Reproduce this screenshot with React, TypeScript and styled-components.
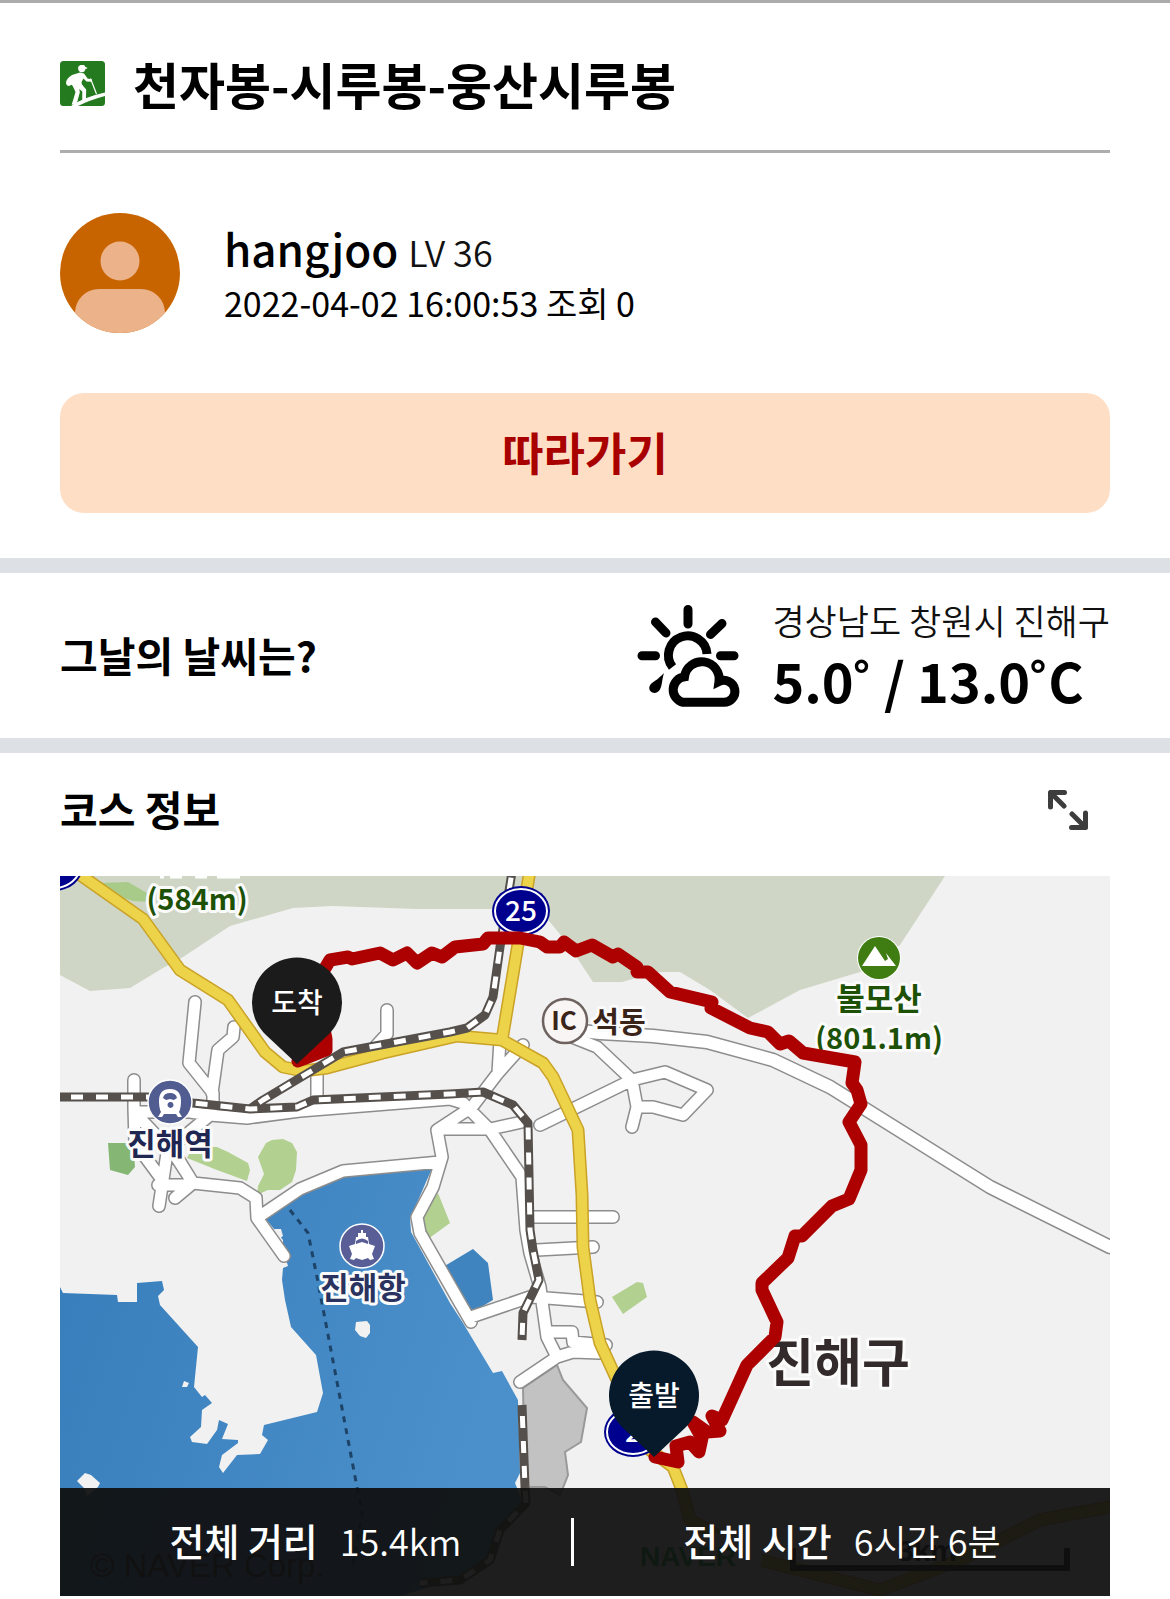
import React from "react";
import styled, { createGlobalStyle } from "styled-components";

const Global = createGlobalStyle`
  * { box-sizing: border-box; }
  body {
    margin: 0;
    background: #fff;
    color: #000;
    font-family: "Noto Sans CJK KR", sans-serif;
  }
  h1, h2, p, dl, dt, dd { margin: 0; }
`;

const Page = styled.main`
  border-top: 3px solid #ababab;
  padding-bottom: 3px;
`;

const Section = styled.section`
  padding: 0 60px;
  & + & {
    border-top: 15px solid #dde0e5;
  }
`;

const TitleBar = styled.header`
  display: flex;
  align-items: center;
  gap: 28px;
  padding: 50px 0 37px;
  border-bottom: 3px solid #adadad;
`;

const Title = styled.h1`
  font-size: 50px;
  line-height: 60px;
  font-weight: 700;
`;

const Profile = styled.div`
  display: flex;
  align-items: center;
  gap: 44px;
  padding: 60px 0;
`;

const UserLine = styled.p`
  display: flex;
  align-items: baseline;
  gap: 10px;
  line-height: 56px;
`;

const UserName = styled.a`
  color: inherit;
  text-decoration: none;
  font-size: 44px;
  font-weight: 500;
`;

const Level = styled.span`
  font-size: 36px;
  font-weight: 350;
  color: #111;
`;

const Meta = styled.p`
  font-size: 34px;
  line-height: 48px;
`;

const FollowButton = styled.button`
  display: block;
  width: 100%;
  height: 120px;
  margin-bottom: 45px;
  padding: 0 0 4px;
  border: 0;
  border-radius: 24px;
  background: #ffdec6;
  color: #a90000;
  font: inherit;
  font-size: 45px;
  font-weight: 700;
`;

const Row = styled.div<{ $height: number; $lift?: number }>`
  display: flex;
  align-items: center;
  justify-content: space-between;
  min-height: ${(p) => p.$height}px;
  padding-bottom: ${(p) => p.$lift ?? 0}px;
`;

const Heading = styled.h2`
  padding-bottom: 4px;
  font-size: 41px;
  line-height: 60px;
  font-weight: 700;
`;

const Weather = styled.div`
  display: flex;
  align-items: center;
  gap: 22px;
`;

const Place = styled.p`
  font-size: 35px;
  line-height: 48px;
  font-weight: 350;
  color: #111;
`;

const Temperature = styled.p`
  font-size: 54px;
  line-height: 72px;
  font-weight: 700;
`;

const IconButton = styled.button`
  display: flex;
  padding: 22px;
  border: 0;
  background: none;
  color: #3d3d3d;
`;

const MapFrame = styled.div`
  position: relative;
  overflow: hidden;
`;

const MapSvg = styled.svg`
  display: block;
  width: 100%;
  height: auto;
  font-family: "Noto Sans CJK KR", sans-serif;
`;

const Summary = styled.dl`
  position: absolute;
  left: 0;
  right: 0;
  bottom: 0;
  display: flex;
  align-items: center;
  justify-content: space-evenly;
  height: 108px;
  background: rgba(16, 16, 16, 0.94);
  color: #fff;
`;

const Stat = styled.div`
  display: flex;
  align-items: baseline;
  gap: 22px;
  padding-bottom: 4px;
  line-height: 48px;
`;

const StatName = styled.dt`
  font-size: 38px;
  font-weight: 500;
`;

const StatValue = styled.dd`
  font-size: 36px;
  font-weight: 350;
`;

const Bar = styled.div`
  width: 3px;
  height: 48px;
  background: #fff;
`;

const HikerIcon = () => (
  <svg width="45" height="45" viewBox="0 0 45 45" aria-hidden="true">
    <rect width="45" height="45" rx="3.5" fill="#247a1f" />
    <g fill="#fff">
      <circle cx="21.8" cy="7.6" r="3.6" />
      <path d="M18.5 5.6 Q21 3.2 24.4 4.2 L25.4 6 L27.4 6.8 L27 7.8 L18.6 7.6Z" />
      <path d="M20 11.5 L12 14 Q6.5 17 6 22 Q6.5 25 9 25 L11.5 23.8 L14.5 26.5 L22.5 26 L21.5 21 L23.5 17.5 L26.5 20.5 L31.5 20.8 L32 18.4 L27.6 17.6 L24 12.5Z" />
      <path d="M12.5 24.5 L15.5 31 L13 39.5 L11.6 43.5 L15.5 44 L17.2 41 L19.8 31.5 L19 25Z" />
      <path d="M15.5 25 L22.3 30.5 L22.2 39.8 L27.5 39.2 L26 37.2 L26.2 28.5 L21.5 23Z" />
      <path d="M45 31.5 Q24 36 11 45 L18 45 Q30 39 45 35Z" />
    </g>
    <path d="M30.5 17.5 L36.5 33" stroke="#fff" strokeWidth="1.2" />
  </svg>
);

const Avatar = () => (
  <svg width="120" height="120" viewBox="0 0 120 120" role="img" aria-label="hangjoo">
    <clipPath id="avatar">
      <circle cx="60" cy="60" r="60" />
    </clipPath>
    <g clipPath="url(#avatar)">
      <rect width="120" height="120" fill="#c86400" />
      <circle cx="60" cy="48" r="19.5" fill="#ecb289" />
      <rect x="15" y="76" width="90" height="70" rx="24" fill="#ecb289" />
    </g>
  </svg>
);

const WeatherIcon = () => (
  <svg width="120" height="120" viewBox="0 -4 120 120" fill="none" stroke="#000" strokeWidth="9" aria-hidden="true">
    <g strokeLinecap="round">
      <path d="M58 9.5V24M12 55.7H25.5M90.5 55.7H104M25.5 22L36 33M92 23.5L80.5 34.5" />
    </g>
    <path d="M77 54A19.3 19.3 0 1 0 42.5 67" />
    <path d="M53 102.3A13 13 0 0 1 54.5 76.8A17 17 0 0 1 89 81.5A11 11 0 1 1 93 102.3Z" />
    <path d="M34 73C31 82 33 92 24.5 93C18 92 18 86 22 83C28 79 30 77 34 73Z" fill="#000" stroke="none" />
  </svg>
);

const ExpandIcon = () => (
  <svg width="40" height="40" viewBox="0 0 40 40" fill="none" stroke="currentColor" strokeWidth="5" strokeLinecap="round" strokeLinejoin="round" aria-hidden="true">
    <path d="M2.5 17V2.5H16.5M2.5 2.5L16 16M37.5 23V37.5H23.5M37.5 37.5L24 24" />
  </svg>
);

const roads = [
  "M134 1080V1107L135 1143L160 1177",
  "M195 1002L189 1063L213 1093V1106",
  "M234 1027L233 1037L218 1050L212 1093",
  "M387 1010V1034L376 1046",
  "M317 1070V1100",
  "M134 1112H190L210 1115L247 1118L300 1111L450 1099L463 1103L490 1130L522 1177L526 1230L530 1253L540 1287L547 1337L557 1357L520 1382",
  "M134 1112L177 1157L193 1183L240 1188L256 1198L257 1218L284 1256",
  "M210 1115L180 1140L167 1153L159 1206",
  "M165 1140L193 1183L175 1198",
  "M158 1185H190",
  "M257 1218L300 1189L343 1171L440 1162",
  "M472 1107L437 1130L442 1157L433 1187L417 1217L420 1233L460 1303L471 1322",
  "M471 1317L530 1297L547 1298L597 1302",
  "M440 1129H490L522 1122",
  "M472 1107L498 1073L500 1040M498 1073L523 1045",
  "M557 1357L573 1352L600 1353",
  "M547 1332H572L573 1342L606 1345",
  "M533 1217L613 1217",
  "M537 1250L593 1247",
  "M572 1037L597 1047L632 1080L637 1107L632 1127",
  "M632 1080L665 1072L707 1090L683 1115L653 1107H637",
  "M632 1080L540 1125",
];

const highway = "M572 1030L600 1033L653 1036L707 1042L773 1060L830 1087L990 1187L1110 1247";

const yellow = [
  "M76 872L143 919L180 970L228 1000L265 1052L283 1067L303 1071L327 1068L383 1053L457 1036L502 1040L543 1063L553 1077L578 1130L582 1195L583 1247L590 1300L600 1343L617 1380L650 1450L673 1467L682 1490L690 1520L760 1560L880 1590L960 1560L1040 1520L1110 1507",
  "M530 870L517 950L502 1040",
];

const rails = [
  "M60 1097H147L193 1103L250 1109L297 1107L313 1100L450 1094L483 1092L513 1105L528 1123L530 1230L533 1250L539 1280L523 1313L522 1340",
  "M250 1109L263 1100L343 1052L450 1032L467 1028L485 1015L493 997L500 947L512 872",
  "M522 1405L525 1487L526 1503L500 1530L490 1560L460 1580L420 1583",
];

const route =
  "M655 1457L678 1462L676 1446L690 1442L699 1452L702 1438L693 1422L707 1432L720 1431L712 1416L722 1420L747 1365L775 1337L777 1322L762 1290V1283L788 1258L795 1236H802L832 1206L849 1199L861 1170V1145L849 1122L861 1104L857 1090L852 1083L855 1062L803 1053L789 1041L780 1044L768 1032L750 1028L711 1008L712 1002L670 992L648 972H637V967L618 954L613 957L592 945L576 951L564 942L560 947H547L540 942L520 938H488L483 944L455 947L442 957L432 953L417 963L407 953L393 960L380 953L352 959L348 957L330 960L315 985L326 1039V1050L298 1061L310 1050L322 1044";

const Shield = ({ x, y, label }: { x: number; y: number; label?: string }) => (
  <g>
    <ellipse cx={x} cy={y} rx="29" ry="25" fill="#00008f" />
    <ellipse cx={x} cy={y} rx="26" ry="22" fill="none" stroke="#fff" strokeWidth="2" />
    {label && (
      <text x={x} y={y + 10} fontSize="28" fontWeight="500" fill="#fff" textAnchor="middle">
        {label}
      </text>
    )}
  </g>
);

const MapLabel = styled.text<{ $size?: number }>`
  paint-order: stroke;
  stroke: #fbfbfb;
  stroke-width: 6px;
  stroke-linejoin: round;
  text-anchor: middle;
  font-size: ${(p) => p.$size ?? 31}px;
  font-weight: 700;
`;

const PinText = styled.text`
  fill: #fff;
  text-anchor: middle;
  font-size: 28px;
  font-weight: 500;
`;

const Pin = ({ x, y, color, label }: { x: number; y: number; color: string; label: string }) => (
  <g transform={`translate(${x} ${y})`}>
    <path d="M0 0L-31 -29A45 45 0 1 1 31 -29Z" fill={color} />
    <PinText y="-51">{label}</PinText>
  </g>
);

const CourseMap = () => (
  <MapSvg viewBox="60 876 1050 720" role="img" aria-label="코스 지도">
    <defs>
      <linearGradient id="sea" x1="0" y1="0" x2="1" y2="0.3">
        <stop offset="0" stopColor="#377dbb" />
        <stop offset="1" stopColor="#4b90ca" />
      </linearGradient>
    </defs>
    <rect x="60" y="876" width="1050" height="720" fill="#f1f1f1" />
    <path
      fill="#cfd6c5"
      d="M60 876V975L90 991L130 988L163 968L183 957L230 926L293 908L333 906L417 909H492L540 910L550 922L570 947L593 982H622L657 972H680L710 990L748 1018L800 990L860 972L900 945L945 876Z"
    />
    <path fill="#a9cb8a" d="M98 883L128 882L147 893L150 902L133 901L117 896Z" />
    <path
      fill="url(#sea)"
      d="M265 1218L300 1193L343 1175L433 1166L413 1212L410 1217L411 1232L450 1303L463 1323L493 1373L502 1371L518 1400L520 1473L515 1483L522 1500L495 1535L485 1565L440 1584L400 1596H60V1287L63 1293L117 1295L118 1302H137V1283L162 1281L164 1290L158 1296L160 1305L198 1347L194 1387L202 1397L205 1395L212 1403L202 1410L201 1427L190 1437L192 1442L207 1444L217 1430L219 1420L228 1424L222 1439L238 1440V1443L222 1455L219 1467L223 1473L237 1455L260 1454L268 1440L262 1435L264 1425L317 1412L323 1393L316 1355L291 1327L285 1300L282 1280L283 1268L288 1266L283 1250V1240Z"
    />
    <path fill="#3f84bf" d="M443 1267L473 1249L488 1263L493 1300L471 1313L460 1303Z" />
    <g fill="#f1f1f1">
      <path d="M77 1481L85 1473L91 1475L100 1483L98 1487L87 1496L84 1488Z" />
      <path d="M356 1322L367 1321L370 1325L370 1333L366 1338L360 1336L355 1330Z" />
      <path d="M184 1381L189 1383L187 1387L182 1387Z" />
      <path d="M274 1229L281 1229L283 1236L279 1239Z" />
    </g>
    <g fill="#b2d090">
      <path d="M193 1147H217L228 1152L248 1163L250 1170L247 1181L217 1170L187 1158Z" />
      <path d="M266 1143L272 1140L283 1139L292 1143L297 1152L296 1170L292 1182L280 1190L268 1190L257 1195L258 1186L264 1174L258 1157Z" />
      <path d="M438 1193L450 1223L428 1239L420 1217Z" />
      <path d="M612 1297L637 1282L643 1283L647 1297L623 1314Z" />
    </g>
    <path fill="#85b673" d="M108 1143H133L135 1167L128 1175L110 1170Z" />
    <path
      fill="#c2c2c2"
      stroke="#999"
      strokeWidth="2"
      d="M523 1388L557 1365L563 1380L587 1408L581 1442L565 1452L568 1475L560 1495L545 1487H525Z"
    />
    <path d="M290 1210L308 1233L317 1277L357 1487L362 1513L352 1570" fill="none" stroke="#1d4468" strokeWidth="3" strokeDasharray="6 6" />

    <g fill="none" strokeLinecap="round" strokeLinejoin="round">
      <path d={roads.join("")} stroke="#8d8d8d" strokeWidth="14" />
      <path d={highway} stroke="#8d8d8d" strokeWidth="15" />
      <path d={roads.join("")} stroke="#fff" strokeWidth="11" />
      <path d={highway} stroke="#fff" strokeWidth="12" />
      <path d={yellow.join("")} stroke="#c9a227" strokeWidth="13" />
      <path d={yellow.join("")} stroke="#ecd349" strokeWidth="10" />
    </g>
    <g fill="none" strokeLinejoin="round">
      <path d={rails.join("")} stroke="#55504b" strokeWidth="9" />
      <path d={rails.join("")} stroke="#fff" strokeWidth="5" strokeDasharray="12 13" strokeDashoffset="14" />
    </g>

    <Shield x={54} y={866} />
    <Shield x={521} y={911} label="25" />
    <Shield x={633} y={1432} label="2" />

    <path d="M160 877H164M170 877H182M195 877H207M217 877H240" stroke="#fff" strokeWidth="3" />
    <MapLabel x="197" y="910" $size={29} fill="#1d5106">(584m)</MapLabel>

    <circle cx="879" cy="958" r="22" fill="#fff" />
    <circle cx="879" cy="958" r="21" fill="#3f7d12" />
    <path d="M862 966L875 946L885 961L888 959L886 953L896 966Z" fill="#fff" />
    <MapLabel x="879" y="1010" fill="#1d5106">불모산</MapLabel>
    <MapLabel x="879" y="1049" $size={29} fill="#1d5106">(801.1m)</MapLabel>

    <circle cx="565" cy="1021" r="22" fill="#f8f5f4" stroke="#6e625f" strokeWidth="2.5" />
    <text x="564" y="1030" fontSize="26" fontWeight="700" fill="#3a2319" textAnchor="middle">IC</text>
    <MapLabel x="619" y="1033" $size={29} fill="#3a2319">석동</MapLabel>

    <circle cx="170" cy="1102" r="22" fill="#515c90" stroke="#fff" strokeWidth="1.5" />
    <path
      fill="#fff"
      fillRule="evenodd"
      d="M161 1112Q159 1108 159 1101Q159 1089 170 1089T181 1101Q181 1108 179 1112L182 1117H178L176 1114H164L162 1117H158ZM163 1098L166 1100L170 1099L174 1100L177 1098Q176 1093 170 1093T163 1098ZM170 1102A3 3 0 1 0 171 1102Z"
    />
    <MapLabel x="170" y="1155" fill="#1f2652">진해역</MapLabel>

    <circle cx="362" cy="1246" r="22" fill="#595f96" stroke="#fff" strokeWidth="1.5" />
    <path
      fill="#fff"
      fillRule="evenodd"
      d="M361 1230H363V1233H366V1237H368L369 1244L375 1246L372 1254L374 1259L370 1260L368 1258L362 1260L356 1258L354 1260L350 1259L352 1254L349 1246L355 1244L356 1237H358V1233H361ZM356 1244L362 1242L368 1244V1241Q362 1236 356 1241Z"
    />
    <MapLabel x="363" y="1299" fill="#2a3260">진해항</MapLabel>

    <MapLabel x="838" y="1382" $size={52} fill="#332b2b">진해구</MapLabel>

    <path d={route} fill="none" stroke="#ad0000" strokeWidth="13" strokeLinecap="round" strokeLinejoin="round" />
    <Pin x={297} y={1064} color="#1b1b1b" label="도착" />
    <Pin x={654} y={1457} color="#071a2c" label="출발" />

    <text x="90" y="1577" fontSize="33" fill="#222" fontFamily="Liberation Sans, sans-serif">© NAVER Corp.</text>
    <rect x="622" y="1534" width="140" height="46" rx="23" fill="#fff" />
    <text x="640" y="1566" fontSize="28" fontWeight="700" fill="#00a83c" fontFamily="Liberation Sans, sans-serif">NAVER</text>
    <path d="M793 1548V1568H1067V1548" fill="none" stroke="#000" strokeWidth="6" />
    <text x="927" y="1561" fontSize="30" fontWeight="700" textAnchor="middle" fontFamily="Liberation Sans, sans-serif">3km</text>
  </MapSvg>
);

export default function App() {
  return (
    <>
      <Global />
      <Page>
        <Section>
          <TitleBar>
            <HikerIcon />
            <Title>천자봉-시루봉-웅산시루봉</Title>
          </TitleBar>
          <Profile>
            <Avatar />
            <div>
              <UserLine>
                <UserName href="#profile">hangjoo</UserName>
                <Level>LV 36</Level>
              </UserLine>
              <Meta>2022-04-02 16:00:53 조회 0</Meta>
            </div>
          </Profile>
          <FollowButton type="button">따라가기</FollowButton>
        </Section>

        <Section>
          <Row $height={165}>
            <Heading>그날의 날씨는?</Heading>
            <Weather>
              <WeatherIcon />
              <div>
                <Place>경상남도 창원시 진해구</Place>
                <Temperature>5.0˚ / 13.0˚C</Temperature>
              </div>
            </Weather>
          </Row>
        </Section>

        <Section>
          <Row $height={123} $lift={10}>
            <Heading>코스 정보</Heading>
            <IconButton type="button" aria-label="지도 확대">
              <ExpandIcon />
            </IconButton>
          </Row>
          <MapFrame>
            <CourseMap />
            <Summary>
              <Stat>
                <StatName>전체 거리</StatName>
                <StatValue>15.4km</StatValue>
              </Stat>
              <Bar />
              <Stat>
                <StatName>전체 시간</StatName>
                <StatValue>6시간 6분</StatValue>
              </Stat>
            </Summary>
          </MapFrame>
        </Section>
      </Page>
    </>
  );
}
